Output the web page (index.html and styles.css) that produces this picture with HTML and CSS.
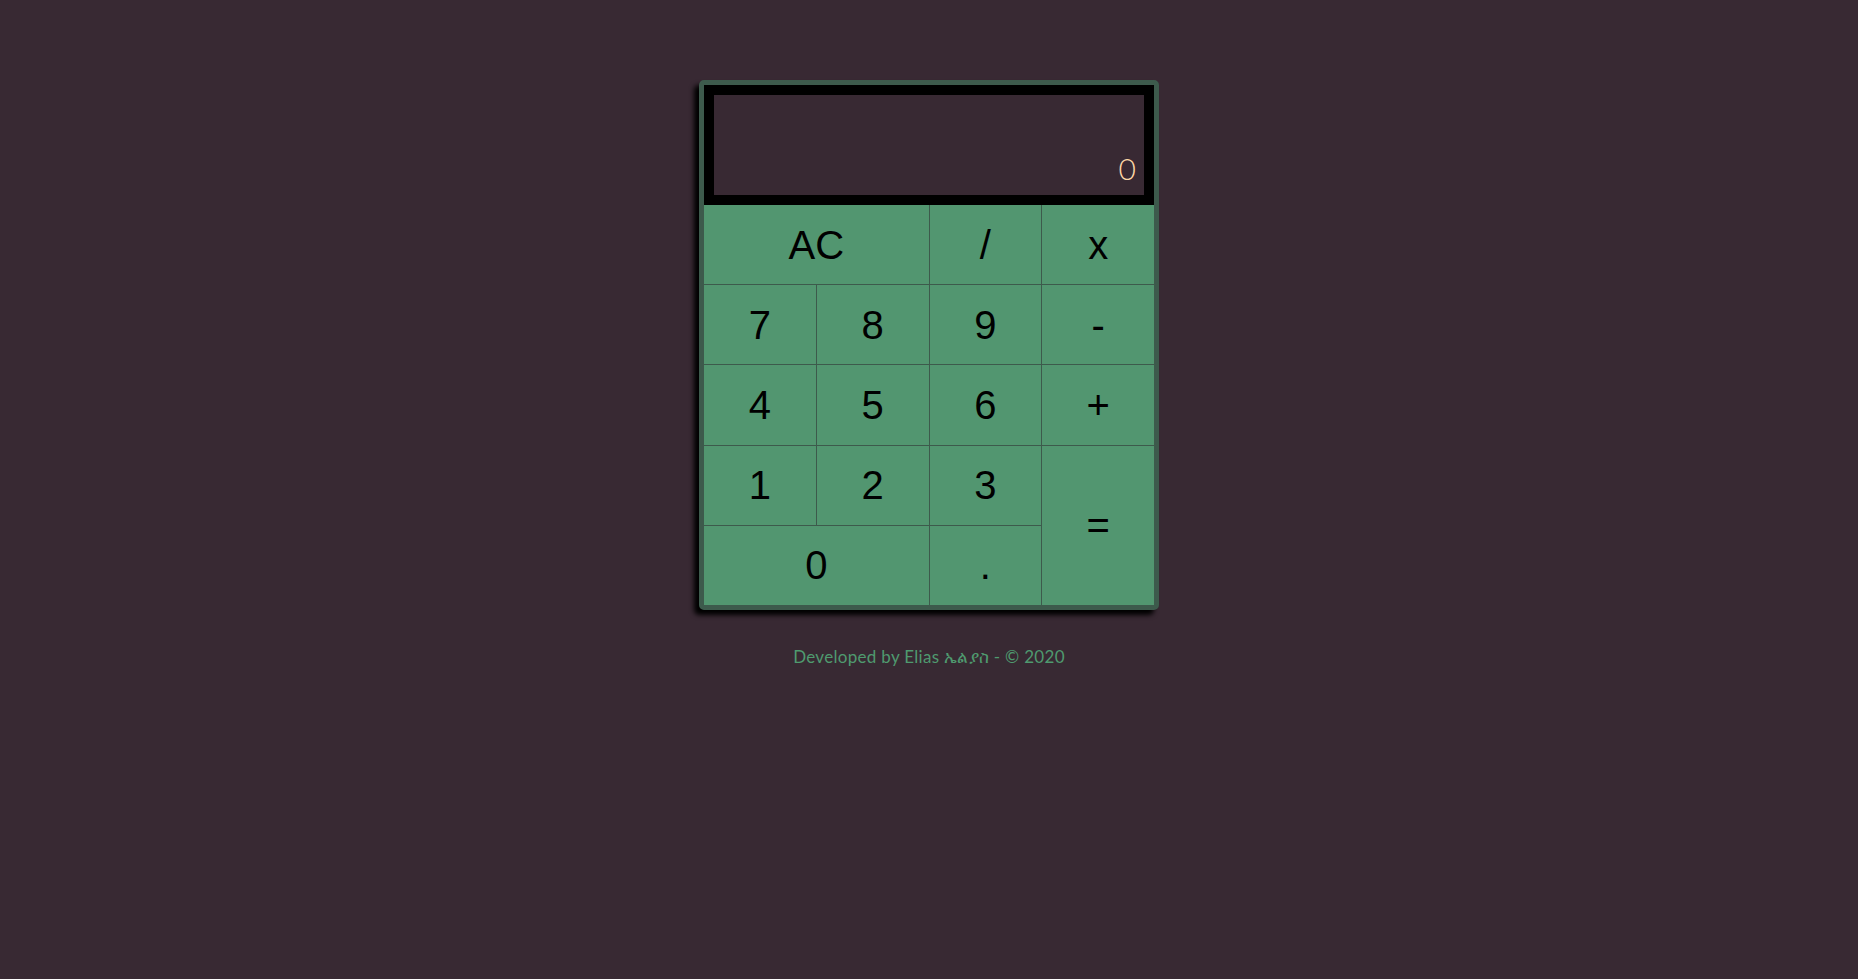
FILE: index.html
```html
<!DOCTYPE html>
<html lang="en">
<head>
<meta charset="utf-8">
<title>Calculator</title>
<link rel="stylesheet" href="styles.css">
</head>
<body>
<main class="page">
  <div class="calculator">
    <div class="display">
      <div class="screen"><span class="value">0</span></div>
    </div>
    <div class="keys">
      <button class="key span-2">AC</button>
      <button class="key">/</button>
      <button class="key">x</button>
      <button class="key">7</button>
      <button class="key">8</button>
      <button class="key">9</button>
      <button class="key">-</button>
      <button class="key">4</button>
      <button class="key">5</button>
      <button class="key">6</button>
      <button class="key">+</button>
      <button class="key">1</button>
      <button class="key">2</button>
      <button class="key">3</button>
      <button class="key equals">=</button>
      <button class="key span-2">0</button>
      <button class="key">.</button>
    </div>
  </div>
  <footer class="credit">Developed by Elias ኤልያስ - © 2020</footer>
</main>
</body>
</html>
```

FILE: styles.css
```css
html, body {
  margin: 0;
  padding: 0;
  background: #382933;
  height: 100%;
}

.page {
  display: flex;
  flex-direction: column;
  align-items: center;
  padding-top: 80px;
}

.calculator {
  width: 450px;
  border: 5px solid #3d5a4c;
  border-radius: 5px;
  background: #3d5a4c;
  box-shadow: -5px 5px 5px #000;
}

.display {
  background: #000;
  padding: 10px;
}

.screen {
  height: 100px;
  background: #382933;
  display: flex;
  align-items: flex-end;
  justify-content: flex-end;
  padding: 0 8px 12px 0;
  box-sizing: border-box;
}

.value {
  font-family: Lato, "Open Sans", sans-serif;
  font-size: 30px;
  font-weight: 300;
  line-height: 1;
  color: #fdd7a6;
}

.keys {
  display: grid;
  grid-template-columns: repeat(4, 1fr);
  grid-template-rows: repeat(5, 79.2px);
  gap: 1px;
  background: #3d5a4c;
}

.key {
  margin: 0;
  border: 0;
  padding: 0;
  background: #529670;
  color: #000;
  font-family: "Liberation Sans", Arial, sans-serif;
  font-size: 40px;
  line-height: 1;
  display: flex;
  align-items: center;
  justify-content: center;
}

.span-2 {
  grid-column: span 2;
}

.equals {
  grid-row: span 2;
}

.credit {
  margin-top: 36px;
  font-family: Lato, "DejaVu Sans", sans-serif;
  font-size: 17px;
  color: #4f9a6f;
  letter-spacing: 0.3px;
}
```
